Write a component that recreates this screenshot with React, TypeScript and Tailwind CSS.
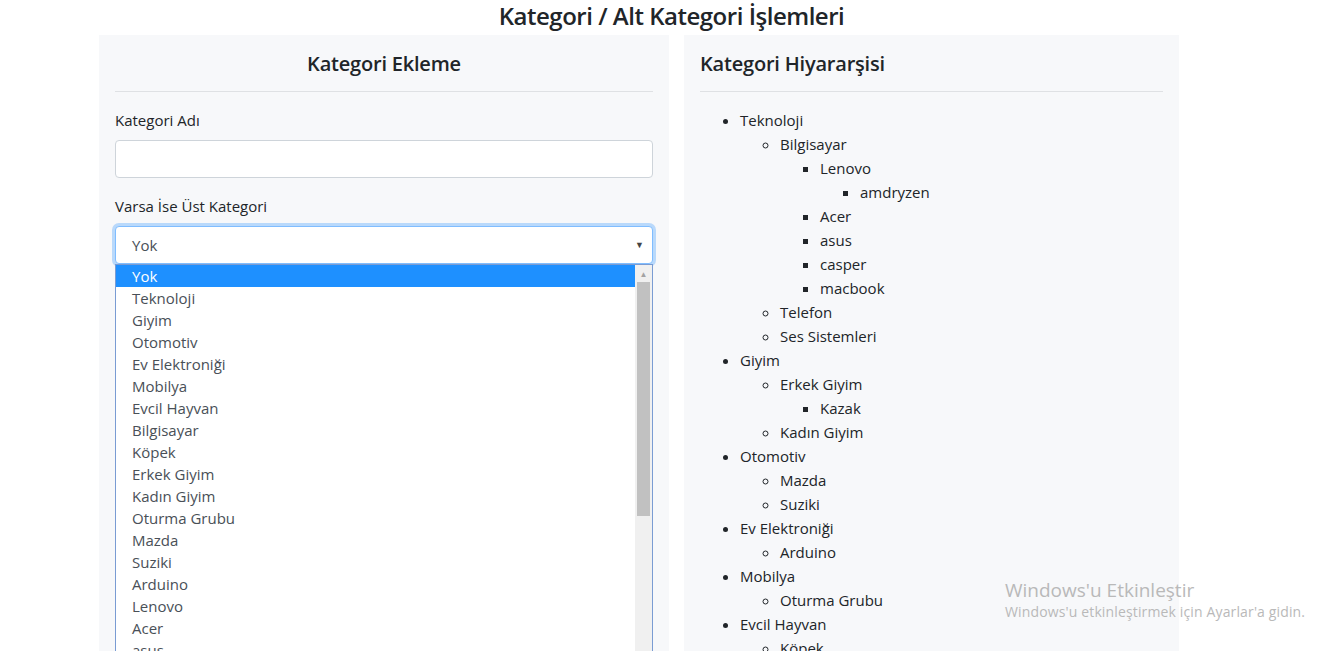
import React from "react";

type Node = { name: string; children?: Node[] };

const tree: Node[] = [
  {
    name: "Teknoloji",
    children: [
      {
        name: "Bilgisayar",
        children: [
          { name: "Lenovo", children: [{ name: "amdryzen" }] },
          { name: "Acer" },
          { name: "asus" },
          { name: "casper" },
          { name: "macbook" },
        ],
      },
      { name: "Telefon" },
      { name: "Ses Sistemleri" },
    ],
  },
  {
    name: "Giyim",
    children: [
      { name: "Erkek Giyim", children: [{ name: "Kazak" }] },
      { name: "Kadın Giyim" },
    ],
  },
  { name: "Otomotiv", children: [{ name: "Mazda" }, { name: "Suziki" }] },
  { name: "Ev Elektroniği", children: [{ name: "Arduino" }] },
  { name: "Mobilya", children: [{ name: "Oturma Grubu" }] },
  { name: "Evcil Hayvan", children: [{ name: "Köpek" }] },
];

const options = [
  "Yok",
  "Teknoloji",
  "Giyim",
  "Otomotiv",
  "Ev Elektroniği",
  "Mobilya",
  "Evcil Hayvan",
  "Bilgisayar",
  "Köpek",
  "Erkek Giyim",
  "Kadın Giyim",
  "Oturma Grubu",
  "Mazda",
  "Suziki",
  "Arduino",
  "Lenovo",
  "Acer",
  "asus",
  "casper",
  "macbook",
];

function Tree({ nodes, depth }: { nodes: Node[]; depth: number }) {
  const style =
    depth === 0 ? "list-[disc]" : depth === 1 ? "list-[circle]" : "list-[square]";
  return (
    <ul className={`${style} pl-10`}>
      {nodes.map((n) => (
        <li key={n.name} className="leading-6">
          {n.name}
          {n.children && <Tree nodes={n.children} depth={depth + 1} />}
        </li>
      ))}
    </ul>
  );
}

export default function App() {
  return (
    <div
      className="relative h-[651px] overflow-hidden bg-white text-[#212529]"
      style={{ fontFamily: '"Open Sans", "Noto Sans", sans-serif' }}
    >
      <h4 className="pt-[1px] text-center text-[24px] font-semibold leading-[29px] tracking-[-0.02em]">
        Kategori / Alt Kategori İşlemleri
      </h4>

      <div className="mt-[5px] flex gap-[15px] pl-[99px]">
        {/* left card */}
        <div className="w-[570px] bg-[#f7f8fa] p-4 text-[15px]">
          <h5 className="pt-[1px] text-center text-[20px] font-semibold leading-6 tracking-[-0.01em]">
            Kategori Ekleme
          </h5>
          <hr className="mt-[15px] border-t border-[#dfe1e4]" />
          <label className="mt-4 block leading-6">Kategori Adı</label>
          <div className="mt-2 h-[38px] rounded border border-[#ced4da] bg-white" />
          <label className="mt-4 block leading-6">Varsa İse Üst Kategori</label>
          <div className="relative mt-2">
            <div className="flex h-[38px] items-center justify-between rounded border border-[#80bdff] bg-white pl-4 pr-2 text-[#495057] shadow-[0_0_0_3px_rgba(0,123,255,0.25)]">
              <span>Yok</span>
              <span className="text-[9px] text-[#444]">▼</span>
            </div>
            <div className="absolute left-0 right-0 top-[38px] flex h-[420px] border border-[#7a9cd3] bg-white">
              <div className="flex-1 overflow-hidden">
                {options.map((o, i) => (
                  <div
                    key={o}
                    className={`h-[22px] pl-4 leading-[22px] ${
                      i === 0 ? "bg-[#1e90ff] text-white" : "text-[#495057]"
                    }`}
                  >
                    {o}
                  </div>
                ))}
              </div>
              <div className="flex w-[17px] flex-col bg-[#f0f0f0]">
                <div className="flex h-[17px] items-center justify-center text-[8px] text-[#a3a3a3]">
                  ▲
                </div>
                <div className="mx-[2px] h-[234px] bg-[#c1c1c1]" />
                <div className="flex-1" />
                <div className="flex h-[17px] items-center justify-center text-[8px] text-[#505050]">
                  ▼
                </div>
              </div>
            </div>
          </div>
        </div>

        {/* right card */}
        <div className="w-[495px] bg-[#f7f8fa] p-4 text-[15px]">
          <h5 className="pt-[1px] text-[20px] font-semibold leading-6 tracking-[-0.01em]">
            Kategori Hiyararşisi
          </h5>
          <hr className="mt-[15px] border-t border-[#dfe1e4]" />
          <div className="mt-4">
            <Tree nodes={tree} depth={0} />
          </div>
        </div>
      </div>

      {/* windows activation watermark */}
      <div className="pointer-events-none absolute left-[1005px] top-[578px] text-[#b9b9b9]">
        <div className="text-[19px] leading-6">Windows'u Etkinleştir</div>
        <div className="text-[14px] leading-5 tracking-[0.01em]">
          Windows'u etkinleştirmek için Ayarlar'a gidin.
        </div>
      </div>
    </div>
  );
}
